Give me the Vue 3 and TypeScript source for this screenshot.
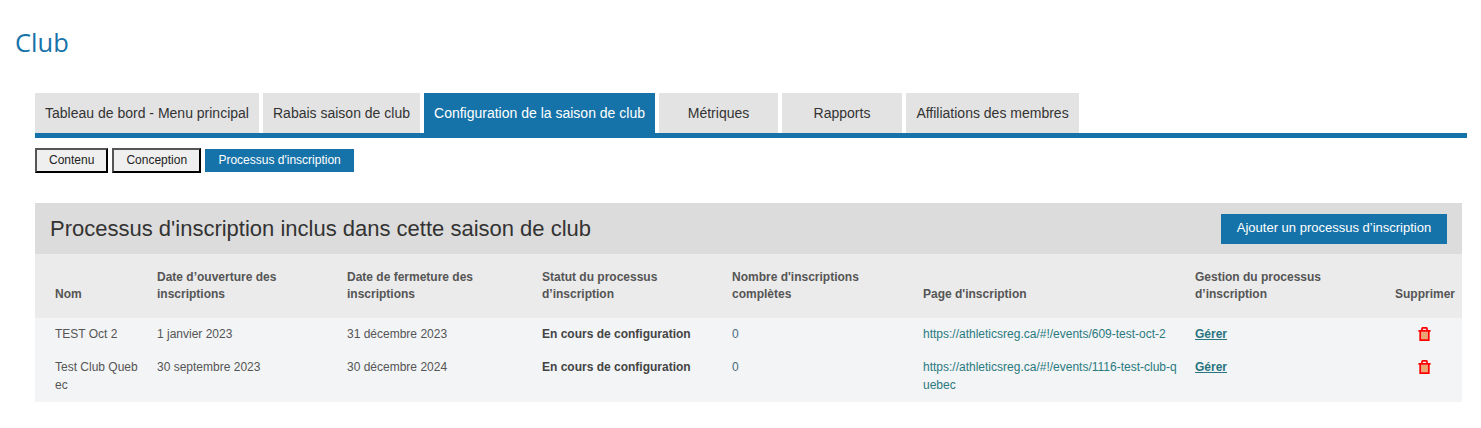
<script setup lang="ts">
interface Row {
  name: string
  open: string
  close: string
  status: string
  count: string
  url: string
}
const tabs = [
  { label: 'Tableau de bord - Menu principal', cls: 'w1', active: false },
  { label: 'Rabais saison de club', cls: 'w2', active: false },
  { label: 'Configuration de la saison de club', cls: 'w3', active: true },
  { label: 'Métriques', cls: 'w4', active: false },
  { label: 'Rapports', cls: 'w5', active: false },
  { label: 'Affiliations des membres', cls: 'w6', active: false },
]
const rows: Row[] = [
  { name: 'TEST Oct 2', open: '1 janvier 2023', close: '31 décembre 2023', status: 'En cours de configuration', count: '0', url: 'https://athleticsreg.ca/#!/events/609-test-oct-2' },
  { name: 'Test Club Quebec', open: '30 septembre 2023', close: '30 décembre 2024', status: 'En cours de configuration', count: '0', url: 'https://athleticsreg.ca/#!/events/1116-test-club-quebec' },
]
</script>

<template>
  <div class="page">
    <h1 class="title">Club</h1>
    <div class="content">
      <nav class="tabs">
        <a v-for="t in tabs" :key="t.label" class="tab" :class="[t.cls, { active: t.active }]">{{ t.label }}</a>
      </nav>
      <div class="subs">
        <button class="sub">Contenu</button>
        <button class="sub">Conception</button>
        <button class="sub current">Processus d'inscription</button>
      </div>
      <section class="panel">
        <header class="panel-head">
          <h2>Processus d'inscription inclus dans cette saison de club</h2>
          <button class="add">Ajouter un processus d’inscription</button>
        </header>
        <table>
          <colgroup>
            <col class="c1" /><col class="c2" /><col class="c3" /><col class="c4" />
            <col class="c5" /><col class="c6" /><col class="c7" /><col class="c8" />
          </colgroup>
          <thead>
            <tr>
              <th class="first">Nom</th>
              <th>Date d’ouverture des inscriptions</th>
              <th>Date de fermeture des inscriptions</th>
              <th>Statut du processus d’inscription</th>
              <th>Nombre d'inscriptions complètes</th>
              <th>Page d'inscription</th>
              <th>Gestion du processus d’inscription</th>
              <th class="del">Supprimer</th>
            </tr>
          </thead>
          <tbody>
            <tr v-for="r in rows" :key="r.name">
              <td class="first">{{ r.name }}</td>
              <td>{{ r.open }}</td>
              <td>{{ r.close }}</td>
              <td class="status">{{ r.status }}</td>
              <td class="count">{{ r.count }}</td>
              <td class="page-cell"><a class="link">{{ r.url }}</a></td>
              <td><a class="manage">Gérer</a></td>
              <td class="del">
                <svg class="trash" width="13" height="14" viewBox="0 0 13 14" aria-hidden="true">
                  <path d="M2.5 4.5h8v8.2h-8z" fill="#f0a080" />
                  <path d="M4.7 5.5v6.5M6.5 5.5v6.5M8.3 5.5v6.5" stroke="#e0b060" stroke-width="0.8" fill="none" />
                  <path d="M0.4 3.9h12.2M2.2 3.9v9.2h8.6V3.9M4 3.6V1.8q0-1 1-1h3q1 0 1 1v1.8" stroke="#f00" stroke-width="1.7" fill="none" />
                </svg>
              </td>
            </tr>
          </tbody>
        </table>
      </section>
    </div>
  </div>
</template>

<style>
html, body { margin: 0; background: #fff; }
</style>

<style scoped>
.page {
  font-family: "Liberation Sans", Arial, sans-serif;
  padding: 27px 14px 0 15px;
  color: #333;
}
.title {
  margin: 0;
  font-family: "Open Sans", sans-serif;
  font-weight: 400;
  font-size: 25.5px;
  line-height: 30px;
  color: #1673a9;
}
.content { margin: 36px 0 0 20px; }
.tabs {
  display: flex;
  gap: 4px;
  border-bottom: 5px solid #1673a9;
}
.tab {
  height: 40px;
  box-sizing: border-box;
  display: flex;
  align-items: center;
  justify-content: center;
  background: #e3e3e3;
  color: #333;
  font-size: 14px;
  white-space: nowrap;
}
.tab.active { background: #1673a9; color: #fff; }
.w1 { width: 224px; }
.w2 { width: 157px; }
.w3 { width: 231px; }
.w4 { width: 119px; }
.w5 { width: 120px; }
.w6 { width: 173px; }
.subs {
  display: flex;
  align-items: center;
  gap: 4px;
  margin-top: 10px;
}
.sub {
  height: 25px;
  box-sizing: border-box;
  padding: 0 12px 2px;
  font: 12px "Liberation Sans", Arial, sans-serif;
  color: #222;
  background: #efefef;
  border: 2px solid;
  border-color: #555 #000 #000 #555;
  border-radius: 0;
}
.sub.current {
  height: 23px;
  width: 149px;
  padding: 0 0 2px;
  background: #1673a9;
  color: #fff;
  border: 0;
}
.panel { width: 1427px; margin-top: 30px; }
.panel-head {
  height: 51px;
  box-sizing: border-box;
  display: flex;
  align-items: center;
  justify-content: space-between;
  padding: 0 15px;
  background: #dcdcdc;
}
.panel-head h2 {
  margin: 0;
  font-weight: 400;
  font-size: 22px;
  color: #333;
}
.add {
  width: 226px;
  height: 30px;
  padding: 0 0 2px;
  border: 0;
  background: #1673a9;
  color: #fff;
  font: 13px "Liberation Sans", Arial, sans-serif;
}
table {
  width: 100%;
  table-layout: fixed;
  border-collapse: collapse;
  font-size: 12px;
}
.c1 { width: 112px; }
.c2 { width: 190px; }
.c3 { width: 195px; }
.c4 { width: 190px; }
.c5 { width: 191px; }
.c6 { width: 272px; }
.c7 { width: 200px; }
.c8 { width: 77px; }
thead tr { height: 64px; background: #ebebeb; }
th {
  text-align: left;
  vertical-align: bottom;
  padding: 0 10px 15px;
  font-weight: 700;
  line-height: 17px;
  color: #555;
}
tbody tr { background: #f2f4f6; }
td {
  vertical-align: top;
  padding: 7px 10px 8px;
  line-height: 18px;
  color: #555;
  word-break: break-all;
}
td.first { padding-right: 4px; }
td.page-cell { padding-right: 5px; }
.first { padding-left: 20px; }
.status { font-weight: 700; color: #444; }
td.count { color: #4a6a7c; }
.link { color: #2a7a80; }
.manage { color: #2a7480; font-weight: 700; text-decoration: underline; }
th.del { padding-left: 10px; padding-right: 0; white-space: nowrap; }
td.del { text-align: center; padding: 9px 0 0 0; }
.trash { display: block; margin: 0 0 0 33px; }
</style>
